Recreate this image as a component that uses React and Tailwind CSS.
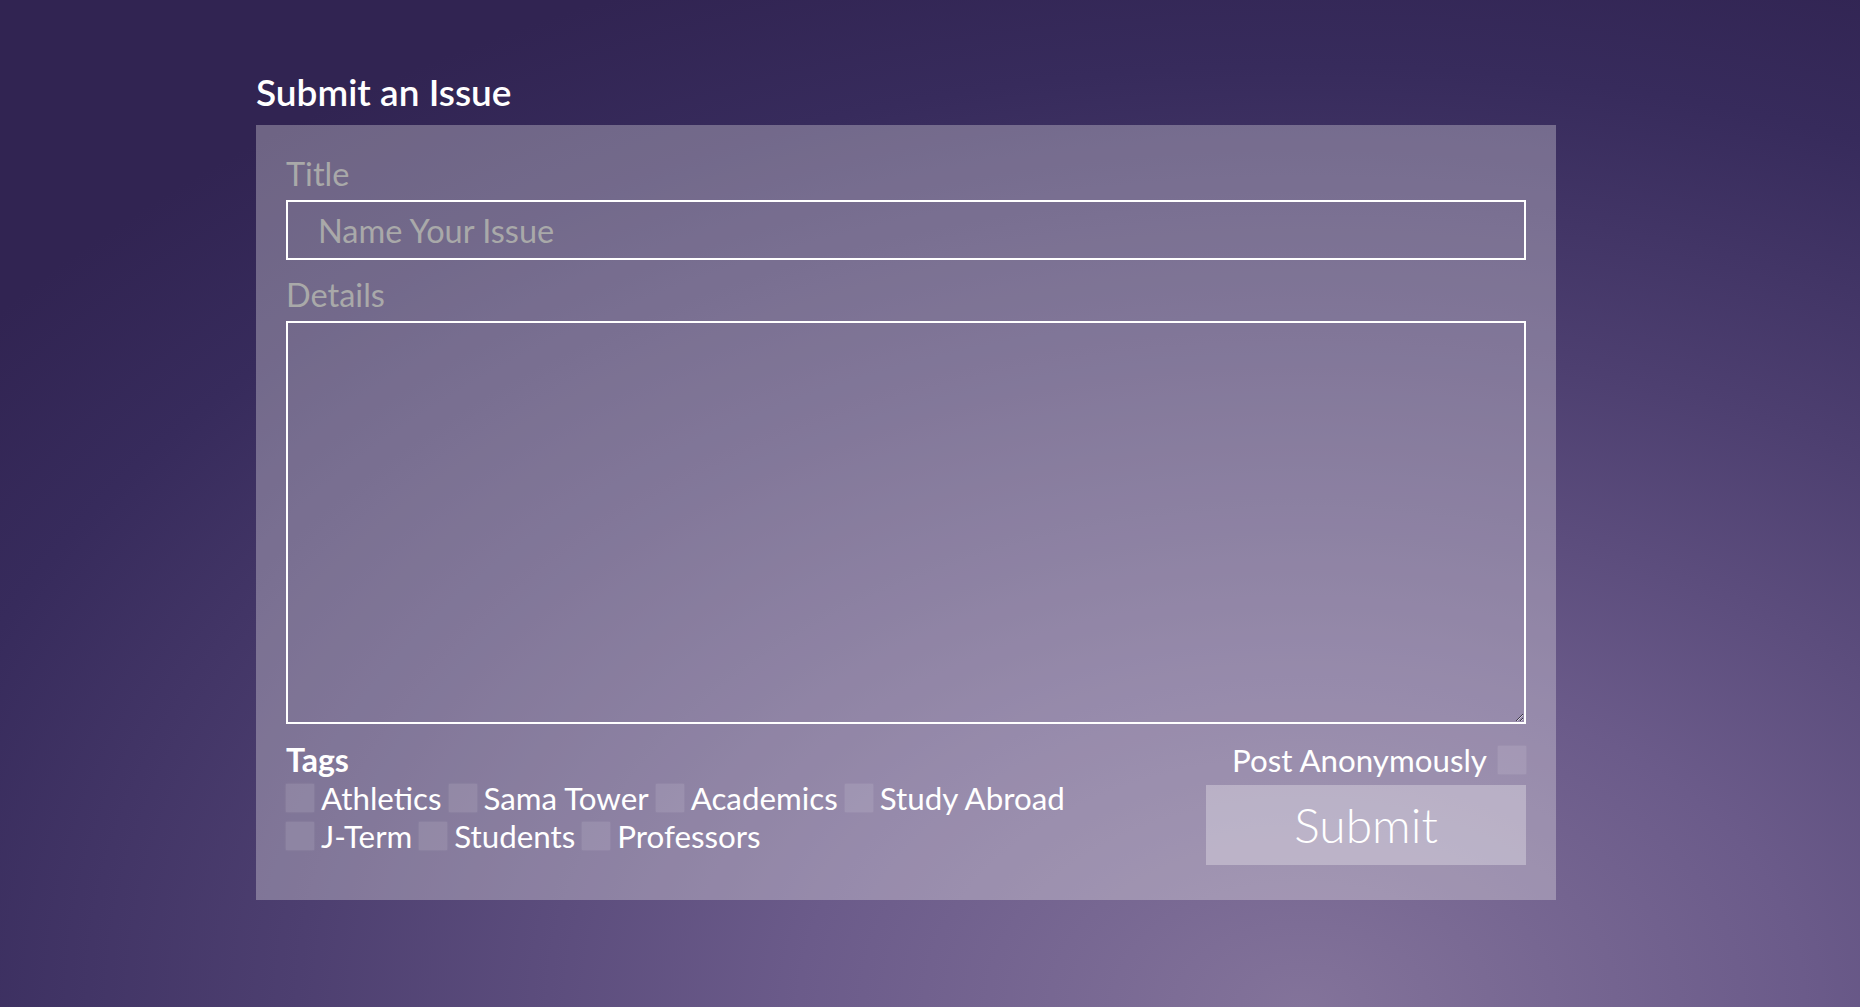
import React from "react";

const row1 = ["Athletics", "Sama Tower", "Academics", "Study Abroad"];
const row2 = ["J-Term", "Students", "Professors"];

function Tag({ label }) {
  return (
    <label className="flex items-center mr-[7px]">
      <input
        type="checkbox"
        className="appearance-none w-[28px] h-[28px] bg-[rgba(255,255,255,0.11)] shadow-[0_0_2px_rgba(255,255,255,0.15)] mr-[7px] shrink-0"
      />
      <span>{label}</span>
    </label>
  );
}

export default function App() {
  return (
    <div className="min-h-screen w-full bg-[radial-gradient(ellipse_90%_110%_at_70%_100%,#83739a_0%,#6b5b8a_30%,#4d3f70_60%,#372b5c_85%,#312452_100%)] font-['Lato',sans-serif] pl-[256px] pt-[70px] pb-[107px]">
      <h1 className="text-[37px] leading-[44px] font-semibold text-white mb-[11px]">
        Submit an Issue
      </h1>
      <div className="w-[1300px] bg-[rgba(250,245,245,0.31)] px-[30px] pt-[30px] pb-[35px]">
        <div className="text-[32.5px] leading-[38px] text-[#a9a9a9]">Title</div>
        <input
          type="text"
          placeholder="Name Your Issue"
          className="mt-[7px] block w-full h-[60px] border-2 border-white bg-transparent px-[30px] text-[32.5px] text-white placeholder:text-[#a9a9a9] outline-none font-['Lato',sans-serif]"
        />
        <div className="mt-[16px] text-[32.5px] leading-[38px] text-[#a9a9a9]">Details</div>
        <textarea className="mt-[7px] block w-full h-[403px] border-2 border-white bg-transparent text-white outline-none" />
        <div className="mt-[17px] flex justify-between text-[31.3px] leading-[38px] text-white">
          <div className="flex flex-col">
            <div className="font-bold text-[32px]">Tags</div>
            <div className="flex h-[38px]">
              {row1.map((t) => (
                <Tag key={t} label={t} />
              ))}
            </div>
            <div className="flex h-[38px]">
              {row2.map((t) => (
                <Tag key={t} label={t} />
              ))}
            </div>
          </div>
          <div className="flex flex-col items-end w-[320px]">
            <label className="flex items-center h-[38px]">
              <span className="whitespace-nowrap">Post Anonymously</span>
              <input
                type="checkbox"
                className="appearance-none w-[28px] h-[28px] bg-[rgba(255,255,255,0.11)] shadow-[0_0_2px_rgba(255,255,255,0.15)] ml-[11px]"
              />
            </label>
            <button className="mt-[6px] w-[320px] h-[80px] bg-[rgba(255,255,255,0.3)] text-white text-[48px] font-light leading-none font-['Lato',sans-serif]">
              Submit
            </button>
          </div>
        </div>
      </div>
    </div>
  );
}
